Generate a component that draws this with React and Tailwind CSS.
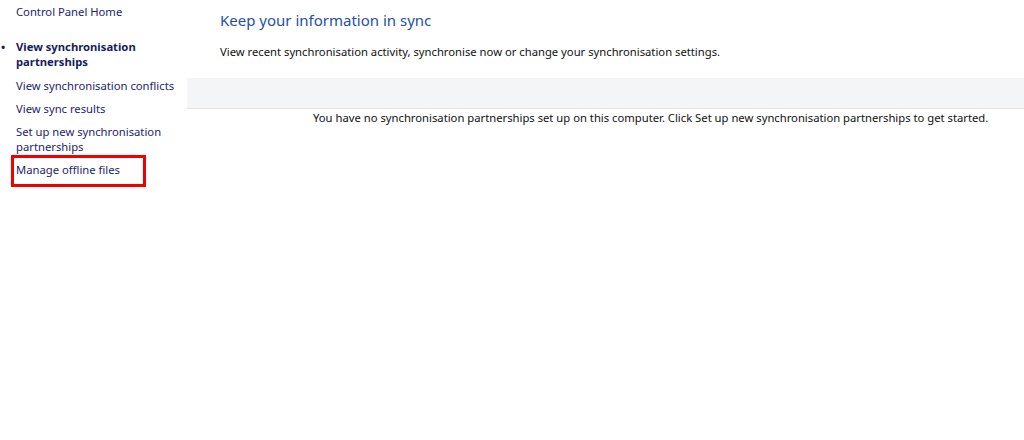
import React from "react";

const links = [
  { label: "View synchronisation conflicts" },
  { label: "View sync results" },
  { label: "Set up new synchronisation partnerships" },
];

export default function App() {
  return (
    <div
      className="flex h-[440px] w-[1024px] bg-white text-[11.25px] leading-[15px]"
      style={{ fontFamily: '"Noto Sans", sans-serif' }}
    >
      {/* sidebar */}
      <div className="w-[187px] shrink-0 pl-4 text-[#1c2470]">
        <div className="pt-[4px]">Control Panel Home</div>
        <div className="relative mt-[20px] w-[150px] font-bold text-[#14205e]">
          <span className="absolute -left-[15px] top-0">•</span>
          View synchronisation partnerships
        </div>
        <div className="mt-[9px] flex flex-col gap-[8px]">
          {links.map((l) => (
            <div key={l.label} className="w-[160px]">
              {l.label}
            </div>
          ))}
        </div>
        <div className="relative mt-[8px]">
          Manage offline files
          <div className="absolute -left-[5px] -top-[7px] h-[32px] w-[135px] border-[3px] border-[#f00000]" />
        </div>
      </div>

      {/* main */}
      <div className="flex flex-1 flex-col">
        <div className="pl-[33px] pt-[10px] text-[15px] leading-[20px] text-[#1f4fa8]">
          Keep your information in sync
        </div>
        <div className="mt-[14px] pl-[33px] text-[#111]">
          View recent synchronisation activity, synchronise now or change your synchronisation settings.
        </div>
        <div className="mt-[19px] h-[31px] border-b border-[#e3e3e3] bg-[#f4f5f7]" />
        <div className="mt-[1px] whitespace-nowrap pl-[126px] text-[#111]">
          You have no synchronisation partnerships set up on this computer. Click Set up new synchronisation partnerships to get started.
        </div>
      </div>
    </div>
  );
}
